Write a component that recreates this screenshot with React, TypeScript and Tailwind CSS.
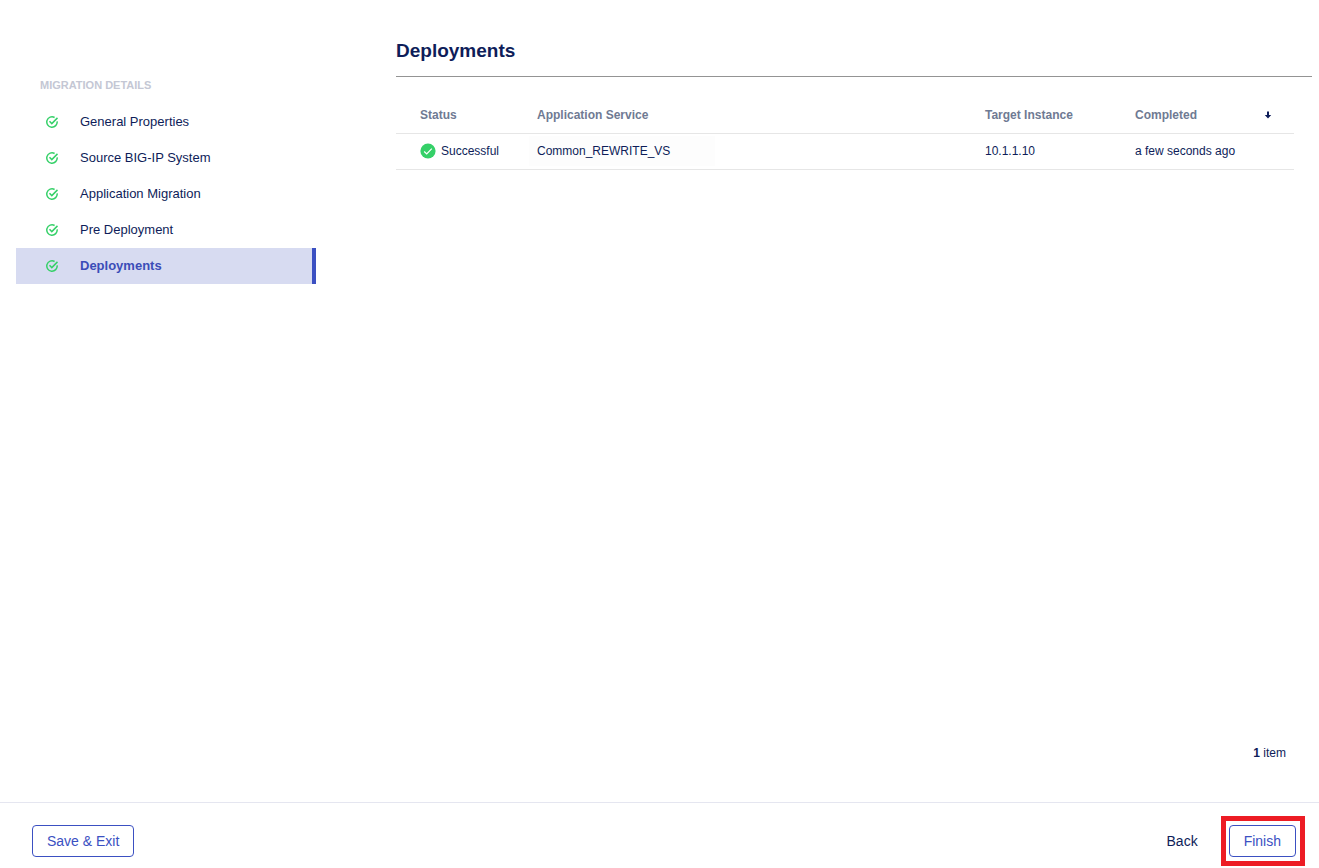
const steps = [
  'General Properties',
  'Source BIG-IP System',
  'Application Migration',
  'Pre Deployment',
  'Deployments',
];

function StepCheck() {
  return (
    <svg className="h-3 w-3 shrink-0" viewBox="0 0 12 12" fill="none" stroke="#35d068" strokeWidth="1.5" aria-hidden="true">
      <path d="M11.15 5.4A5.2 5.2 0 1 1 8.6 1.5" />
      <path d="M3.5 5.3 5.8 7.6 11.5 1.9" />
    </svg>
  );
}

function StatusIcon() {
  return (
    <svg className="h-4 w-4 shrink-0" viewBox="0 0 16 16" aria-hidden="true">
      <circle cx="8" cy="8" r="7.6" fill="#35d068" />
      <path d="M4.2 8.5 6.7 10.9 11.8 5.6" fill="none" stroke="#fff" strokeWidth="1.2" />
    </svg>
  );
}

function SortArrow() {
  return (
    <svg className="h-2 w-2" viewBox="0 0 8 8" fill="#0e1d59" aria-hidden="true">
      <path d="M3 0.5H5V4H7.2L4 7.5L0.8 4H3Z" />
    </svg>
  );
}

export default function App() {
  return (
    <div className="flex min-h-screen flex-col bg-white font-['Liberation_Sans',Arial,sans-serif] text-[#0e1d59]">
      <div className="flex flex-1">
        <nav aria-label="Migration details" className="w-[316px] shrink-0 pt-[77px] pl-4">
          <h2 className="pl-6 text-[11px] leading-4 font-bold text-[#c4c7d4] uppercase">Migration Details</h2>
          <ul className="mt-[11px]">
            {steps.map((step) => {
              const current = step === 'Deployments';
              return (
                <li key={step}>
                  <a
                    href="#"
                    aria-current={current ? 'step' : undefined}
                    className={
                      current
                        ? 'flex h-9 items-center gap-[22px] border-r-4 border-[#3b50c2] bg-[#d7dbf1] pl-[30px] text-[13px] font-bold text-[#3b4db8]'
                        : 'flex h-9 items-center gap-[22px] pl-[30px] text-[13px]'
                    }
                  >
                    <StepCheck />
                    {step}
                  </a>
                </li>
              );
            })}
          </ul>
        </nav>

        <main className="flex flex-1 flex-col pr-[7px] pl-20">
          <h1 className="border-b border-[#949494] pt-[38px] pb-3 text-[19px] leading-[26px] font-bold">Deployments</h1>
          <div className="flex flex-1 flex-col pt-5 pr-[18px]">
            <table className="w-full table-fixed text-left text-[12px]">
              <colgroup>
                <col className="w-[133px]" />
                <col />
                <col className="w-[150px]" />
                <col className="w-[167px]" />
              </colgroup>
              <thead className="text-[#6f7a93]">
                <tr className="h-9 border-b border-[#e6e6e6]">
                  <th className="pl-6">Status</th>
                  <th className="pl-2">Application Service</th>
                  <th className="pl-2">Target Instance</th>
                  <th className="pr-[22px] pl-2" aria-sort="descending">
                    <button type="button" className="flex w-full items-center justify-between">
                      Completed
                      <SortArrow />
                    </button>
                  </th>
                </tr>
              </thead>
              <tbody>
                <tr className="h-9 border-b border-[#e6e6e6]">
                  <td className="pl-6">
                    <span className="flex items-center gap-[5px]">
                      <StatusIcon />
                      Successful
                    </span>
                  </td>
                  <td>
                    <span className="block w-[186px] bg-[#fdfdfd] py-1.5 pl-2">Common_REWRITE_VS</span>
                  </td>
                  <td className="pl-2">10.1.1.10</td>
                  <td className="pl-2">a few seconds ago</td>
                </tr>
              </tbody>
            </table>
            <p className="mt-auto pr-2 pb-10 text-right text-[12px] leading-[18px]">
              <b>1</b> item
            </p>
          </div>
        </main>
      </div>

      <footer className="flex items-center border-t border-[#e5e6f0] pt-[13px] pr-3.5 pb-0.5 pl-8 text-[14px]">
        <button type="button" className="h-8 rounded border border-[#3b50c2] px-3.5 text-[#3b50c2]">
          Save &amp; Exit
        </button>
        <button type="button" className="mr-[23px] ml-auto h-8">
          Back
        </button>
        <div className="border-[5px] border-[#ed1c24] py-1 pr-1 pl-[3px]">
          <button type="button" className="block h-8 rounded border border-[#3b50c2] px-3.5 text-[#3b50c2]">
            Finish
          </button>
        </div>
      </footer>
    </div>
  );
}
